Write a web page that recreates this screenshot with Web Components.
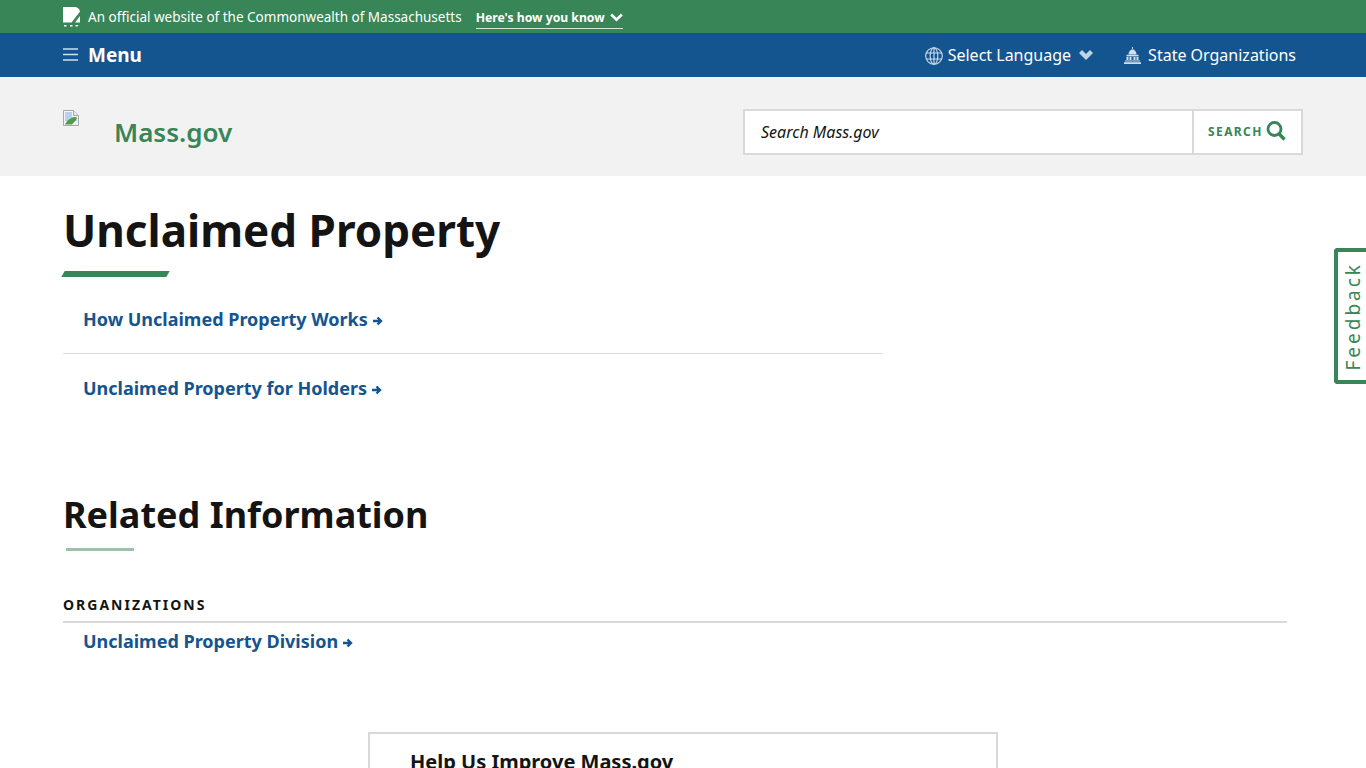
<!DOCTYPE html>
<html lang="en">
<head>
<meta charset="utf-8">
<title>Unclaimed Property | Mass.gov</title>
<style>
  html, body { margin: 0; height: 768px; overflow: hidden; background: #fff; }
  body { font-family: "Noto Sans", "Liberation Sans", sans-serif; color: #141414; }
</style>
</head>
<body>
<official-banner></official-banner>
<main-nav></main-nav>
<site-header></site-header>
<page-section>
  <page-title>Unclaimed Property</page-title>
  <link-list>
    <arrow-link>How Unclaimed Property Works</arrow-link>
    <arrow-link>Unclaimed Property for Holders</arrow-link>
  </link-list>
  <related-info>
    <arrow-link slot="links" compact>Unclaimed Property Division</arrow-link>
  </related-info>
  <help-card>Help Us Improve Mass.gov</help-card>
</page-section>
<feedback-tab></feedback-tab>

<script>
class OfficialBanner extends HTMLElement {
  constructor() {
    super();
    this.attachShadow({ mode: 'open' }).innerHTML = `
<style>
  :host { display: flex; align-items: center; height: 33px; padding-left: 63px; background: #388557; color: #fff; font-size: 13.5px; box-sizing: border-box; }
  svg.seal { width: 17px; height: 20px; margin-right: 8px; margin-top: 1px; flex: none; }
  .how { margin-left: 14px; display: flex; align-items: center; gap: 5px; font-size: 12.2px; font-weight: 700; border-bottom: 1px solid #d6e7dd; height: 20px; margin-top: 3px; }
  .how svg { width: 13px; height: 9px; }
</style>
<svg class="seal" viewBox="0 0 17 20"><path d="M0 0h11.500C14.500 0 16.500 1.500 17 4.500L8.500 15.500H0z" fill="#fff"/><path d="M17 9v6.500h-5z" fill="#fff"/><path d="M1 18h2.500v1.500H1zM7 18h2.500v1.500H7zM12.500 18h3l-1 1.500h-2z" fill="#fff"/></svg>
<span>An official website of the Commonwealth of Massachusetts</span>
<span class="how">Here's how you know <svg viewBox="0 0 13 9"><path d="M1.200 1.500l5.300 5.200 5.300-5.200" fill="none" stroke="#fff" stroke-width="2.600"/></svg></span>`;
  }
}

class MainNav extends HTMLElement {
  constructor() {
    super();
    this.attachShadow({ mode: 'open' }).innerHTML = `
<style>
  :host { display: flex; align-items: center; height: 44px; padding: 0 70px 0 63px; background: #14558f; color: #fff; box-sizing: border-box; }
  .menu { display: flex; align-items: center; font-size: 19px; font-weight: 700; line-height: 42px; margin-bottom: 1px; }
  .menu svg { width: 15px; height: 13px; margin-right: 10px; }
  .right { margin-left: auto; display: flex; align-items: center; font-size: 16px; }
  .item { display: flex; align-items: center; }
  .globe { width: 18px; height: 18px; margin-right: 5px; margin-top: 2px; }
  .chev { width: 14px; height: 10px; margin-left: 8px; }
  .capitol { width: 17px; height: 17px; margin-right: 7px; margin-left: 31px; }
</style>
<div class="menu">
  <svg viewBox="0 0 15 13"><path d="M0 1h15M0 6.500h15M0 12h15" stroke="#cfe0ee" stroke-width="1.600" fill="none"/></svg>
  Menu
</div>
<div class="right">
  <div class="item">
    <svg class="globe" viewBox="0 0 18 18" fill="none" stroke="#cfe0ee" stroke-width="1.100"><circle cx="9" cy="9" r="8.300"/><ellipse cx="9" cy="9" rx="3.800" ry="8.300"/><path d="M9 .7v16.600M1.400 6h15.200M1.400 12h15.200"/></svg>
    Select Language
    <svg class="chev" viewBox="0 0 14 10"><path d="M0 3l3-3 4 4 4-4 3 3-7 7z" fill="#bfd4e6"/></svg>
  </div>
  <div class="item">
    <svg class="capitol" viewBox="0 0 17 17" fill="#cfe0ee"><path d="M8 0h1v2.200h-1z"/><path d="M4.500 7.400c0-3 1.800-5 4-5s4 2 4 5z"/><path d="M2.500 7.800h12v1.600h-12z"/><path d="M2.500 10h2v3h-2zM5.500 10h2v3h-2zM9.500 10h2v3h-2zM12.500 10h2v3h-2z"/><path d="M1 13.500h15v1.100H1zM0 15.300h17V17H0z"/></svg>
    State Organizations
  </div>
</div>`;
  }
}

class SiteHeader extends HTMLElement {
  constructor() {
    super();
    this.attachShadow({ mode: 'open' }).innerHTML = `
<style>
  :host { display: flex; justify-content: space-between; height: 99px; padding: 32px 63px 0; background: #f2f2f2; box-sizing: border-box; }
  .logo { display: flex; align-items: flex-start; }
  .logo svg { width: 16px; height: 16px; margin-top: 1px; }
  .logo span { margin-left: 35px; margin-top: 4px; font-size: 26px; font-weight: 600; line-height: 38px; color: #388557; }
  .search { display: flex; width: 560px; height: 46px; border: 2px solid #d9d9d9; background: #fff; box-sizing: border-box; }
  .field { flex: 1; padding-left: 16px; font-size: 16px; font-style: italic; line-height: 42px; color: #141414; }
  .btn { display: flex; align-items: center; width: 109px; padding: 0 0 2px 14px; box-sizing: border-box; border-left: 2px solid #d9d9d9; color: #388557; font-size: 12px; font-weight: 700; letter-spacing: 1.4px; }
  .btn svg { width: 20px; height: 20px; margin-left: 3px; }
</style>
<div class="logo">
  <svg viewBox="0 0 16 16"><path d="M.5.500h10l5 5v10H.500z" fill="#f4f4f4" stroke="#a8a8a8"/><path d="M10.500.500v5h5" fill="#e8e8e8" stroke="#a8a8a8"/><path d="M2 2h7v5h5v4L2 11z" fill="#b9d0f2"/><path d="M2 14.500c2-4.500 6-7 10-7.500l2 1-1 2-4 4.500z" fill="#4f9d4a"/></svg>
  <span>Mass.gov</span>
</div>
<div class="search">
  <div class="field">Search Mass.gov</div>
  <div class="btn">SEARCH
    <svg viewBox="0 0 20 20" fill="none" stroke="#388557"><circle cx="8.500" cy="8" r="6.500" stroke-width="2.800"/><path d="M13 12.800l5.500 5.700" stroke-width="3.400"/></svg>
  </div>
</div>`;
  }
}

class PageSection extends HTMLElement {
  constructor() {
    super();
    this.attachShadow({ mode: 'open' }).innerHTML = `
<style>
  :host { display: block; padding: 0 79px 0 63px; }
</style>
<slot></slot>`;
  }
}

class PageTitle extends HTMLElement {
  constructor() {
    super();
    this.attachShadow({ mode: 'open' }).innerHTML = `
<style>
  :host { display: block; padding-top: 27px; }
  h1 { margin: 0; font-size: 44px; line-height: 54px; font-weight: 700; color: #141414; }
  .bar { width: 105px; height: 6px; margin-top: 14px; margin-left: -.5px; background: #388557; transform: skewX(-30deg); }
</style>
<h1><slot></slot></h1>
<div class="bar"></div>`;
  }
}

class LinkList extends HTMLElement {
  constructor() {
    super();
    this.attachShadow({ mode: 'open' }).innerHTML = `
<style>
  :host { display: block; width: 820px; margin-top: 8px; }
  ::slotted(arrow-link:not(:last-child)) { border-bottom: 1px solid #dcdcdc; }
</style>
<slot></slot>`;
  }
}

class ArrowLink extends HTMLElement {
  constructor() {
    super();
    this.attachShadow({ mode: 'open' }).innerHTML = `
<style>
  :host { display: block; height: 69px; padding-left: 20px; box-sizing: border-box; font-size: 18px; font-weight: 700; line-height: 68px; color: #14558f; }
  :host([compact]) { height: 38px; line-height: 36px; }
  svg { width: 10px; height: 10px; margin-left: 0; vertical-align: 0; }
</style>
<slot></slot> <svg viewBox="0 0 10 10"><path d="M0 5h7.500M4.500 1.500L8 5 4.500 8.500" fill="none" stroke="#14558f" stroke-width="2.400"/></svg>`;
  }
}

class RelatedInfo extends HTMLElement {
  constructor() {
    super();
    this.attachShadow({ mode: 'open' }).innerHTML = `
<style>
  :host { display: block; padding-top: 68px; }
  h2 { margin: 0; font-size: 36px; line-height: 48px; font-weight: 700; color: #141414; }
  .bar { width: 68px; height: 3px; margin-top: 9px; margin-left: 3px; background: #9cc2ac; }
  h3 { margin: 44px 0 0; font-size: 14px; line-height: 20px; font-weight: 700; letter-spacing: 2px; color: #141414; padding-bottom: 6px; border-bottom: 2px solid #d9d9d9; }
</style>
<h2>Related Information</h2>
<div class="bar"></div>
<h3>ORGANIZATIONS</h3>
<slot name="links"></slot>`;
  }
}

class HelpCard extends HTMLElement {
  constructor() {
    super();
    this.attachShadow({ mode: 'open' }).innerHTML = `
<style>
  :host { display: block; width: 630px; height: 200px; margin: 71px 0 0 305px; padding: 13px 40px; box-sizing: border-box; border: 2px solid #d9d9d9; font-size: 20px; font-weight: 700; line-height: 30px; color: #141414; }
</style>
<slot></slot>`;
  }
}

class FeedbackTab extends HTMLElement {
  constructor() {
    super();
    this.attachShadow({ mode: 'open' }).innerHTML = `
<style>
  :host { position: fixed; top: 248px; right: 0; width: 32px; height: 136px; box-sizing: border-box; border: 4px solid #388557; border-right: 0; border-radius: 4px 0 0 4px; background: #fff; display: flex; align-items: center; justify-content: center; padding-left: 2px; }
  span { writing-mode: vertical-rl; transform: rotate(180deg); font-size: 19px; letter-spacing: 3px; color: #388557; line-height: 24px; }
</style>
<span>Feedback</span>`;
  }
}

customElements.define('official-banner', OfficialBanner);
customElements.define('main-nav', MainNav);
customElements.define('site-header', SiteHeader);
customElements.define('page-section', PageSection);
customElements.define('page-title', PageTitle);
customElements.define('link-list', LinkList);
customElements.define('arrow-link', ArrowLink);
customElements.define('related-info', RelatedInfo);
customElements.define('help-card', HelpCard);
customElements.define('feedback-tab', FeedbackTab);
</script>
</body>
</html>
